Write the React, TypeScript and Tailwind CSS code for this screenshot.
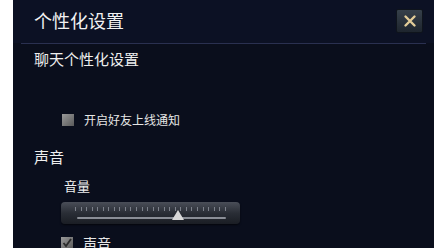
export default function App() {
  const ticks = Array.from({ length: 28 });
  return (
    <div className="w-[444px] h-[248px] bg-white overflow-hidden" style={{ fontFamily: '"Noto Sans CJK SC", "DejaVu Sans", sans-serif' }}>
      <div className="ml-[13px] w-[421px] h-[260px] bg-[#0a0e1c] rounded-tl-[4px] rounded-tr-[6px] text-white">
        {/* Title bar */}
        <div className="flex items-center justify-between pl-[21px] pr-[11px] h-[43px] bg-[#0c1124]">
          <span className="text-[18px] leading-none text-[#f2f2f2] mt-[-4px]">个性化设置</span>
          <button className="w-[27px] h-[24px] mt-[-2px] rounded-[2px] bg-gradient-to-b from-[#36404a] to-[#1e252e] border border-[#0f141c] flex items-center justify-center">
            <svg width="14" height="14" viewBox="0 0 14 14">
              <path d="M2.5 2.5 L11.5 11.5 M11.5 2.5 L2.5 11.5" stroke="#e2cc98" strokeWidth="2.4" strokeLinecap="round" />
            </svg>
          </button>
        </div>
        <div className="mx-[8px] h-px bg-[#2a3050]" />

        <div className="pl-[21px]">
          <div className="text-[15px] leading-none mt-[7px] text-[#eeeeee]">聊天个性化设置</div>

          <div className="flex items-center gap-[10px] ml-[28px] mt-[48px]">
            <div className="w-[12px] h-[12px] bg-gradient-to-br from-[#9a9a9a] to-[#5a5a5a]" />
            <span className="text-[12px] leading-none text-[#e6e6e6]">开启好友上线通知</span>
          </div>

          <div className="text-[15px] leading-none mt-[23px] text-[#eeeeee]">声音</div>

          <div className="text-[13px] leading-none mt-[15px] ml-[30px] text-[#eeeeee]">音量</div>

          {/* Slider */}
          <div className="relative ml-[27px] mt-[10px] w-[179px] h-[22px] rounded-[4px] bg-gradient-to-b from-[#4a4e58] via-[#2a2e36] to-[#1a1d24] shadow-[0_1px_2px_rgba(0,0,0,0.6)]">
            <div className="absolute left-[14px] right-[14px] top-[5px] flex justify-between">
              {ticks.map((_, i) => (
                <div key={i} className="w-px h-[4px] bg-[#7c808a]" />
              ))}
            </div>
            <div className="absolute left-[16px] right-[14px] top-[15px] h-[2px] bg-[#8a8e96] rounded" />
            <svg className="absolute left-[111px] top-[8px]" width="12" height="10" viewBox="0 0 12 10">
              <path d="M6 0 L12 10 L0 10 Z" fill="#d8d8d8" />
            </svg>
          </div>

          <div className="flex items-center gap-[10px] ml-[27px] mt-[12px]">
            <div className="w-[12px] h-[12px] bg-gradient-to-br from-[#9a9a9a] to-[#5a5a5a] flex items-center justify-center">
              <svg width="10" height="10" viewBox="0 0 10 10">
                <path d="M1.5 5 L4 8 L9 1" stroke="#2a2a2a" strokeWidth="1.8" fill="none" />
              </svg>
            </div>
            <span className="text-[14px] leading-none text-[#e6e6e6]">声音</span>
          </div>
        </div>
      </div>
    </div>
  );
}
